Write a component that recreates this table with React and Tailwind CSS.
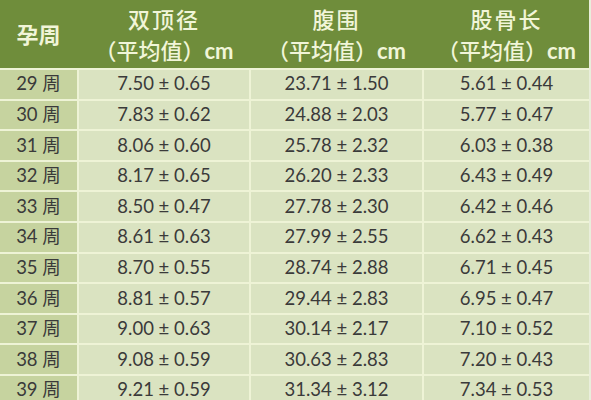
const rows = [
  ["29 周", "7.50 ± 0.65", "23.71 ± 1.50", "5.61 ± 0.44"],
  ["30 周", "7.83 ± 0.62", "24.88 ± 2.03", "5.77 ± 0.47"],
  ["31 周", "8.06 ± 0.60", "25.78 ± 2.32", "6.03 ± 0.38"],
  ["32 周", "8.17 ± 0.65", "26.20 ± 2.33", "6.43 ± 0.49"],
  ["33 周", "8.50 ± 0.47", "27.78 ± 2.30", "6.42 ± 0.46"],
  ["34 周", "8.61 ± 0.63", "27.99 ± 2.55", "6.62 ± 0.43"],
  ["35 周", "8.70 ± 0.55", "28.74 ± 2.88", "6.71 ± 0.45"],
  ["36 周", "8.81 ± 0.57", "29.44 ± 2.83", "6.95 ± 0.47"],
  ["37 周", "9.00 ± 0.63", "30.14 ± 2.17", "7.10 ± 0.52"],
  ["38 周", "9.08 ± 0.59", "30.63 ± 2.83", "7.20 ± 0.43"],
  ["39 周", "9.21 ± 0.59", "31.34 ± 3.12", "7.34 ± 0.53"],
];

const heads = ["双顶径", "腹围", "股骨长"];

export default function App() {
  return (
    <div
      className="w-[591px] h-[400px] overflow-hidden bg-[#e9eedb]"
      style={{ fontFamily: "Lato, 'Noto Sans CJK SC', sans-serif" }}
    >
      <div className="w-[589px] bg-[#eef3d6]">
        {/* header */}
        <div className="flex h-[68px] bg-[#6f8d3b] text-[#f1f5d8] gap-[2px]">
          <div className="w-[77px] flex items-center justify-center text-[22px] font-bold">
            孕周
          </div>
          {heads.map((h, i) => (
            <div
              key={h}
              className={
                "flex flex-col items-center justify-center leading-[31px] text-[22px] pt-[1px] " +
                (i === 0 ? "w-[170px]" : i === 1 ? "w-[171px]" : "flex-1")
              }
            >
              <div className="font-medium tracking-[2px]">{h}</div>
              <div className="font-medium">
                （平均值）<span className="font-bold">cm</span>
              </div>
            </div>
          ))}
        </div>

        {/* body */}
        {rows.map((r) => (
          <div
            key={r[0]}
            className="flex h-[30.6px] border-t-[1.5px] border-[#eef3d6] gap-[2px] text-[#3a3a3a] text-[18.5px] pt-[1px]"
          >
            <div className="w-[77px] flex items-center justify-center bg-[#c6d39f]">
              {r[0]}
            </div>
            <div className="w-[170px] flex items-center justify-center bg-[#dae3c1]">
              {r[1]}
            </div>
            <div className="w-[171px] flex items-center justify-center bg-[#dae3c1]">
              {r[2]}
            </div>
            <div className="flex-1 flex items-center justify-center bg-[#dae3c1]">
              {r[3]}
            </div>
          </div>
        ))}
      </div>
    </div>
  );
}
